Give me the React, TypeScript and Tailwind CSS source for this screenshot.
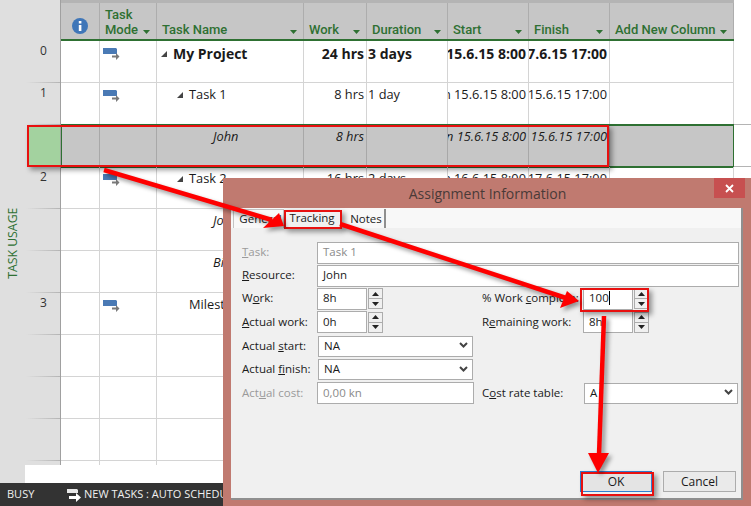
import React from 'react';

const Sort = () => (
  <svg width="7" height="4" viewBox="0 0 7 4" className="shrink-0">
    <path d="M0 0h7L3.500 4z" fill="#2e7032" />
  </svg>
);

const ModeIcon = () => (
  <svg width="17" height="12" viewBox="0 0 17 12" className="ml-[3px] mt-[5px]">
    <path d="M0 0h13l1 1v5H0z" fill="#4a7ab5" />
    <path d="M9 7.500h4V5l3.500 3.500L13 12V9.500H9z" fill="#7a7a7a" />
  </svg>
);

const Twist = () => (
  <svg width="6" height="6" viewBox="0 0 6 6" className="shrink-0">
    <path d="M6 0v6H0z" fill="#444" />
  </svg>
);

const Head = ({ label, w }: { label: React.ReactNode; w: string }) => (
  <div className={`${w} flex items-end justify-between whitespace-nowrap border-r border-[#adadad] pb-[2px] pl-[5px] pr-[6px] font-['Roboto',sans-serif] text-[13px] leading-[15px] font-medium text-[#2e7032]`}>
    <span>{label}</span>
    <span className="pb-[3px]"><Sort /></span>
  </div>
);

type Row = {
  id: string;
  mode?: boolean;
  name?: React.ReactNode;
  work?: string;
  dur?: string;
  start?: string;
  finish?: string;
  kind?: 'bold' | 'sel' | 'plain';
};

const rows: Row[] = [
  { id: '0', mode: true, kind: 'bold', name: <span className="flex items-center gap-[6px] self-start pl-[4px]"><Twist />My Project</span>, work: '24 hrs', dur: '3 days', start: 'n 15.6.15 8:00', finish: '17.6.15 17:00' },
  { id: '1', mode: true, name: <span className="flex items-center gap-[6px] self-start pl-[20px]"><Twist />Task 1</span>, work: '8 hrs', dur: '1 day', start: 'n 15.6.15 8:00', finish: '15.6.15 17:00' },
  { id: '', kind: 'sel', name: <span className="pl-[56px]">John</span>, work: '8 hrs', start: 'n 15.6.15 8:00', finish: '15.6.15 17:00' },
  { id: '2', mode: true, name: <span className="flex items-center gap-[6px] self-start pl-[20px]"><Twist />Task 2</span>, work: '16 hrs', dur: '2 days', start: 'n 16.6.15 8:00', finish: '17.6.15 17:00' },
  { id: '', name: <span className="pl-[56px] italic">John</span> },
  { id: '', name: <span className="pl-[56px] italic">Bill</span> },
  { id: '3', mode: true, name: <span className="pl-[32px]">Milestone</span> },
  { id: '' }, { id: '' }, { id: '' }, { id: '' },
];

const colW = ['w-[39px]', 'w-[57px]', 'w-[147px]', 'w-[63px]', 'w-[81px]', 'w-[81px]', 'w-[81px]', 'w-[124px]'];

const GridRow = ({ r }: { r: Row }) => {
  const sel = r.kind === 'sel';
  const tone = sel ? 'border-[#a8a8a8]' : 'border-[#d4d4d4]';
  const text = `${r.kind === 'bold' ? 'font-bold text-[14px]' : ''} ${sel ? 'italic' : ''}`;
  const cell = `shrink-0 h-full border-r ${tone} overflow-hidden whitespace-nowrap pt-[2px] ${text}`;
  return (
    <div className={`flex h-[42px] shrink-0 border-b ${sel ? 'border-transparent bg-[#c6c6c6] outline-2 -outline-offset-1 outline-[#2e7032]' : 'border-[#d4d4d4]'}`}>
      <div className={`${cell} ${colW[0]}`} />
      <div className={`${cell} ${colW[1]}`}>{r.mode && <ModeIcon />}</div>
      <div className={`${cell} ${colW[2]} flex`}>{r.name}</div>
      <div className={`${cell} ${colW[3]} flex justify-end pr-[2px]`}>{r.work}</div>
      <div className={`${cell} ${colW[4]} pl-[1px]`}>{r.dur}</div>
      <div className={`${cell} ${colW[5]} flex justify-end pr-[2px]`}>{r.start}</div>
      <div className={`${cell} ${colW[6]} flex justify-end pr-[2px]`}>{r.finish}</div>
      <div className={`shrink-0 h-full ${colW[7]} ${sel ? '' : 'border-r border-[#d4d4d4]'}`} />
    </div>
  );
};

const RailCell = ({ id, sel }: { id: string; sel: boolean }) => (
  <div className={`flex h-[42px] shrink-0 flex-col ${sel ? 'ml-[28px] bg-[#a3d29f]' : 'pl-[40px]'}`}>
    <div className="flex-1 pt-[1px] text-[12px] text-[#333]">{id}</div>
    {!sel && <div className="-ml-[14px] h-px bg-linear-to-r from-transparent to-[#b4b4b4]" />}
  </div>
);

const Spin = () => (
  <div className="ml-[1px] flex h-[21px] w-[15px] flex-col border border-[#acacac] bg-[#f0f0f0]">
    <div className="flex flex-1 items-center justify-center border-b border-[#acacac]">
      <svg width="7" height="4" viewBox="0 0 7 4"><path d="M0 4h7L3.500 0z" fill="#222" /></svg>
    </div>
    <div className="flex flex-1 items-center justify-center">
      <svg width="7" height="4" viewBox="0 0 7 4"><path d="M0 0h7L3.500 4z" fill="#222" /></svg>
    </div>
  </div>
);

const Chevron = () => (
  <svg width="9" height="7" viewBox="0 0 9 7" className="shrink-0">
    <path d="M1 1l3.500 3.500L8 1" fill="none" stroke="#444" strokeWidth="2" />
  </svg>
);

const Input = ({ v, w, dim, caret }: { v?: string; w: string; dim?: boolean; caret?: boolean }) => (
  <div className={`${w} flex h-[22px] shrink-0 items-center border border-[#acacac] bg-white pb-px pl-[5px] ${dim ? 'text-[#8a8a8a]' : ''}`}>
    <span className={caret ? 'border-r border-black leading-[14px]' : ''}>{v}</span>
  </div>
);

const Select = ({ v, w }: { v: string; w: string }) => (
  <div className={`${w} flex h-[21px] shrink-0 items-center justify-between border border-[#acacac] bg-white pb-px pl-[5px] pr-[4px]`}>
    <span>{v}</span>
    <Chevron />
  </div>
);

const Label = ({ children, w = 'w-[75px]', dim }: { children: React.ReactNode; w?: string; dim?: boolean }) => (
  <div className={`${w} shrink-0 pb-px ${dim ? 'text-[#9a9a9a]' : 'text-[#1a1a1a]'}`}>{children}</div>
);

const Dialog = () => (
  <div className="absolute left-[223px] top-[178px] flex h-[328px] w-[528px] flex-col bg-[#c07a70] font-['Open_Sans',sans-serif] text-[11.500px] text-[#1a1a1a]">
    <div className="relative flex h-[30px] shrink-0 items-center justify-center pt-[1px] text-[14px] text-[#4a3a38]">
      <span className="pl-[1px]">Assignment Information</span>
      <div className="absolute right-[6px] top-0 flex h-[20px] w-[31px] items-center justify-center bg-[#c75050]">
        <svg width="9" height="9" viewBox="0 0 9 9"><path d="M1 1l7 7M8 1l-7 7" stroke="#fff" strokeWidth="1.800" /></svg>
      </div>
    </div>
    <div className="mx-[8px] mb-[6px] flex flex-1 flex-col border-b-2 border-r-2 border-[#8f8f8f] bg-[#f0f0f0]">
      <div className="flex h-[20px] shrink-0 items-end bg-[#f8f8f8] pl-[2px]">
        <div className="flex h-[19px] w-[51px] items-center justify-center border border-b-0 border-[#c4c4c4] bg-[#f8f8f8] pl-[4px]">General</div>
        <div className="flex h-[20px] w-[56px] items-center justify-center bg-[#f0f0f0]">Tracking</div>
        <div className="flex h-[19px] w-[46px] items-center justify-center border-r-2 border-[#8f8f8f] bg-[#f8f8f8] pl-[8px]">Notes</div>
      </div>
      <div className="flex flex-col px-[11px] pt-[13px]">
        <div className="flex h-[23px] items-center"><Label dim><u>T</u>ask:</Label><Input v="Task 1" w="w-[422px]" dim /></div>
        <div className="flex h-[23px] items-center"><Label><u>R</u>esource:</Label><Input v="John" w="w-[422px]" /></div>
        <div className="flex">
          <div className="flex w-[240px] shrink-0 flex-col">
            <div className="flex h-[23px] items-center"><Label>W<u>o</u>rk:</Label><Input v="8h" w="w-[50px]" /><Spin /></div>
            <div className="flex h-[24px] items-center"><Label><u>A</u>ctual work:</Label><Input v="0h" w="w-[50px]" /><Spin /></div>
            <div className="flex h-[24px] items-center"><Label>Actual <u>s</u>tart:</Label><Select v="NA" w="w-[155px] ml-[1px]" /></div>
            <div className="flex h-[23px] items-center"><Label>Actual <u>f</u>inish:</Label><Select v="NA" w="w-[155px] ml-[1px]" /></div>
            <div className="flex h-[24px] items-center"><Label dim>Act<u>u</u>al cost:</Label><Input v="0,00 kn" w="w-[157px]" dim /></div>
          </div>
          <div className="flex flex-1 flex-col">
            <div className="flex h-[23px] items-center"><Label w="w-[101px]">% Work <u>c</u>omplete:</Label><Input v="100" w="w-[50px]" caret /><Spin /></div>
            <div className="flex h-[24px] items-center"><Label w="w-[101px]">R<u>e</u>maining work:</Label><Input v="8h" w="w-[50px]" /><Spin /></div>
            <div className="h-[47px]" />
            <div className="flex h-[24px] items-center"><Label w="w-[102px]">C<u>o</u>st rate table:</Label><Select v="A" w="w-[154px]" /></div>
          </div>
        </div>
      </div>
      <div className="mt-auto flex justify-end gap-[11px] pb-[6px] pr-[5px]">
        <div className="flex h-[21px] w-[72px] items-center justify-center border border-[#2f7fd0] bg-[#e4e4e4] text-[12px]">OK</div>
        <div className="flex h-[21px] w-[73px] items-center justify-center border border-[#acacac] bg-[#eaeaea] text-[12px]">Cancel</div>
      </div>
    </div>
  </div>
);

// red call-outs drawn over the screenshot
const Callout = ({ pos }: { pos: string }) => (
  <div className={`absolute ${pos} border-2 border-[#e8100f] shadow-[3px_3px_5px_rgba(0,0,0,0.4)]`} />
);

const Arrows = () => (
  <svg width="751" height="506" viewBox="0 0 751 506" className="absolute left-0 top-0 drop-shadow-[3px_3px_2px_rgba(0,0,0,0.4)]">
    <path d="M104 170L272 220" stroke="#fe0000" strokeWidth="4.500" />
    <path d="M284 226L263 228L279 213z" fill="#fe0000" />
    <path d="M340 224L566 298" stroke="#fe0000" strokeWidth="4.500" />
    <path d="M579 301L560 308L567 291z" fill="#fe0000" />
    <path d="M604 316L599 455" stroke="#fe0000" strokeWidth="4.500" />
    <path d="M598 473L588 453L609 453z" fill="#fe0000" />
  </svg>
);

export default function App() {
  return (
    <div className="relative flex h-[506px] w-[751px] flex-col overflow-hidden bg-white font-['Open_Sans',sans-serif] text-[12.800px] text-[#1a1a1a]">
      <div className="flex h-[465px] shrink-0">
        <div className="relative flex w-[61px] shrink-0 flex-col overflow-hidden border-r border-[#a0a0a0] bg-[#dfdfdf]">
          <div className="h-[41px] shrink-0" />
          {rows.map((r, i) => <RailCell key={i} id={r.id} sel={r.kind === 'sel'} />)}
          <div className="absolute left-[-24px] top-[234px] w-[75px] -rotate-90 whitespace-nowrap text-center text-[12.300px] text-[#2e7032]">TASK USAGE</div>
        </div>
        <div className="flex flex-col overflow-hidden">
          <div className="flex h-[41px] w-[673px] shrink-0 border-b-2 border-t-[3px] border-b-[#2e7032] border-t-[#b4b4b4] bg-[#c6c6c6]">
            <div className="flex w-[39px] items-end justify-center border-r border-[#adadad] pb-[5px]">
              <svg width="16" height="16" viewBox="0 0 16 16">
                <circle cx="8" cy="8" r="8" fill="#3f76b8" />
                <rect x="6.800" y="7" width="2.600" height="6" fill="#fff" />
                <rect x="6.800" y="3" width="2.600" height="2.500" fill="#fff" />
              </svg>
            </div>
            <Head w="w-[57px]" label={<>Task<br />Mode</>} />
            <Head w="w-[147px]" label="Task Name" />
            <Head w="w-[63px]" label="Work" />
            <Head w="w-[81px]" label="Duration" />
            <Head w="w-[81px]" label="Start" />
            <Head w="w-[81px]" label="Finish" />
            <Head w="w-[124px]" label="Add New Column" />
          </div>
          {rows.map((r, i) => <GridRow key={i} r={r} />)}
        </div>
        <div className="flex-1">
          <div className="h-[125px] border-b border-[#b4b4b4]" />
          <div className="h-[42px] border-b border-[#b4b4b4]" />
        </div>
      </div>
      <div className="h-[18px] shrink-0 bg-white">
        <div className="h-full w-[25px] bg-[#dfdfdf]" />
      </div>
      <div className="flex h-[23px] shrink-0 items-center bg-[#333] pl-[7px] text-[11px] text-[#f0f0f0]">
        <span className="w-[60px]">BUSY</span>
        <svg width="14" height="14" viewBox="0 0 14 14" className="mr-[3px]">
          <path d="M0 1h10l1 1v3H0z" fill="#e8e8e8" />
          <path d="M2 8h7V5l5 4.500-5 4.500v-3H2z" fill="#fff" />
        </svg>
        <span className="whitespace-nowrap">NEW TASKS : AUTO SCHEDULED</span>
      </div>
      <Dialog />
      <Callout pos="left-[27px] top-[125px] h-[42px] w-[582px]" />
      <Callout pos="left-[284px] top-[210px] h-[19px] w-[58px]" />
      <Callout pos="left-[580px] top-[288px] h-[24px] w-[69px]" />
      <Callout pos="left-[581px] top-[472px] h-[24px] w-[73px]" />
      <Arrows />
    </div>
  );
}
